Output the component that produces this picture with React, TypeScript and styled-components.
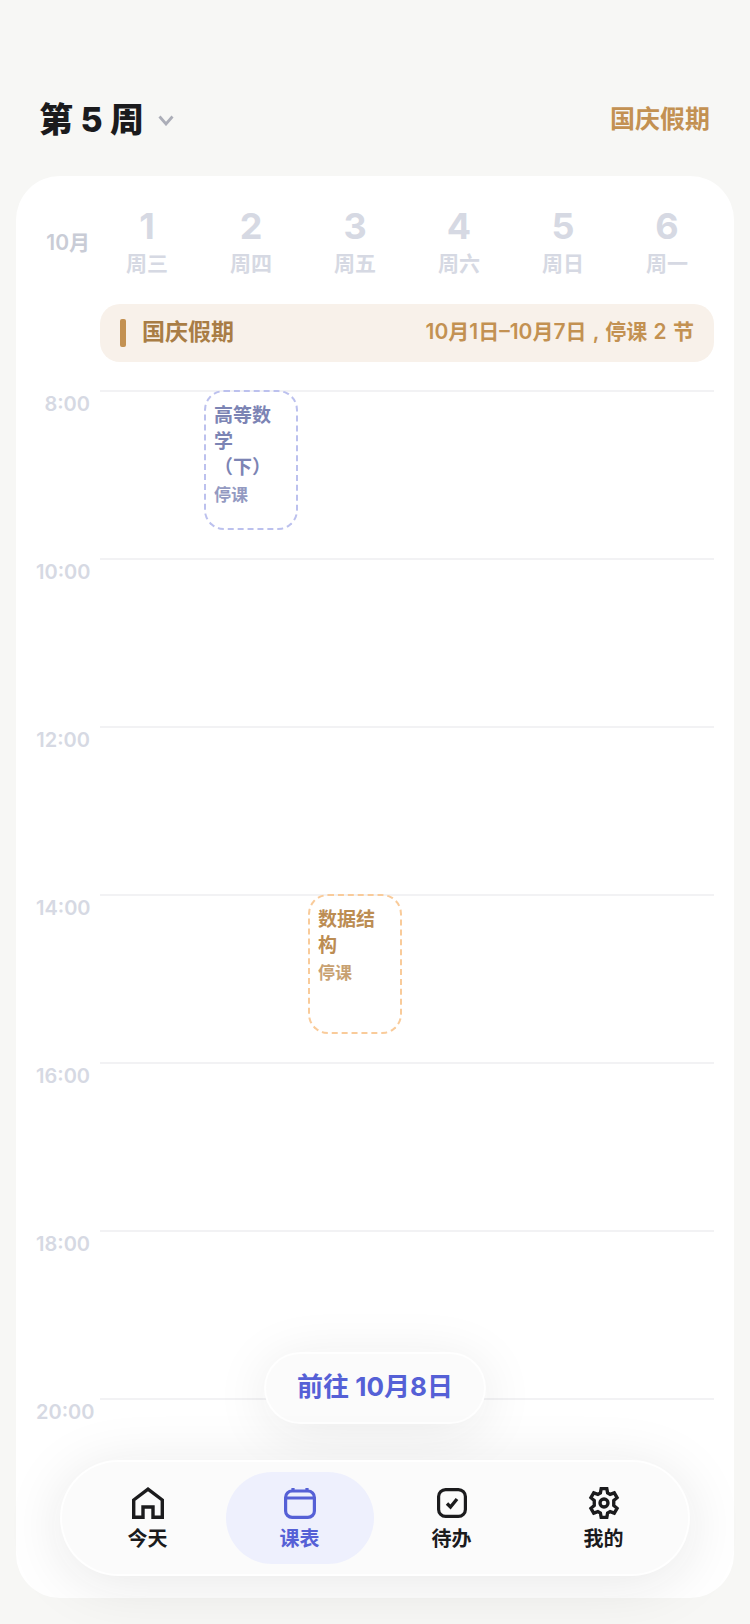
import React from "react";
import styled, { createGlobalStyle } from "styled-components";

const FONT = `Inter, "Noto Sans CJK SC", sans-serif`;

const GlobalStyle = createGlobalStyle`
  html, body {
    margin: 0;
    padding: 0;
    background: #f7f7f5;
    font-family: ${FONT};
  }
`;

const Page = styled.div`
  position: relative;
  width: 750px;
  height: 1624px;
  overflow: hidden;
  background: #f7f7f5;
`;

const Header = styled.header`
  display: flex;
  align-items: center;
  justify-content: space-between;
  height: 48px;
  padding: 93px 40px 35px 39px;
`;
const WeekPicker = styled.div`
  display: flex;
  align-items: center;
  gap: 14px;
`;
const WeekTitle = styled.div`
  font-size: 34px;
  font-weight: 800;
  color: #1b1b1d;
`;
const ChevronIcon = styled.svg`
  margin-top: 6px;
  fill: none;
  stroke: #acaeb8;
`;
const HolidayLink = styled.div`
  font-size: 25px;
  font-weight: 700;
  color: #c39152;
`;

const Card = styled.main`
  height: 1422px;
  margin: 0 16px;
  padding: 28px 20px 0 20px;
  box-sizing: border-box;
  background: #fff;
  border-radius: 44px;
  overflow: hidden;
`;

const DayHead = styled.div`
  display: flex;
  align-items: center;
`;
const MonthLabel = styled.div`
  flex: none;
  width: 54px;
  margin-right: 5px;
  text-align: right;
  font-size: 21px;
  font-weight: 600;
  color: #c9ccd6;
`;
const DayCol = styled.div`
  flex: 0 0 104px;
  display: flex;
  flex-direction: column;
  align-items: center;
`;
const DayNumber = styled.div`
  font-size: 36px;
  line-height: 44px;
  font-weight: 700;
  color: #d6d9e3;
`;
const DayName = styled.div`
  margin-top: 2px;
  font-size: 21px;
  line-height: 28px;
  font-weight: 600;
  color: #d6d9e3;
`;

const Banner = styled.div`
  display: flex;
  align-items: center;
  height: 58px;
  margin: 26px 0 28px 64px;
  padding: 0 20px;
  background: #f8f1ea;
  border-radius: 20px;
  color: #a97d45;
`;
const BannerBar = styled.div`
  width: 6px;
  height: 28px;
  border-radius: 2px;
  background: #c39152;
  margin-right: 16px;
`;
const BannerTitle = styled.div`
  flex: 1;
  font-size: 23px;
  font-weight: 700;
  padding-bottom: 6px;
`;
const BannerInfo = styled.div`
  font-size: 21px;
  font-weight: 600;
  word-spacing: 1px;
  color: #c39152;
  padding-bottom: 6px;
`;

const Row = styled.div`
  display: flex;
  height: 168px;
`;
const TimeLabel = styled.div`
  width: 54px;
  margin-right: 10px;
  text-align: right;
  font-size: 20px;
  line-height: 24px;
  padding-top: 2px;
  font-weight: 600;
  color: #d6d9e3;
`;
const RowBody = styled.div`
  flex: 1;
  border-top: 2px solid #f2f2f4;
`;
const Cells = styled.div`
  display: grid;
  grid-template-columns: repeat(6, 104px);
  margin: -2px -5px 0 -5px;
`;
const Cell = styled.div`
  display: flex;
  justify-content: center;
`;
const Course = styled.div<{ $tone: "blue" | "orange" }>`
  width: 94px;
  height: 140px;
  box-sizing: border-box;
  padding: 11px 22px 0 8px;
  border: 2px dashed ${(p) => (p.$tone === "blue" ? "#bcc1ee" : "#f9cb9a")};
  border-radius: 20px;
  color: ${(p) => (p.$tone === "blue" ? "#7c84b4" : "#bc8d53")};
`;
const CourseName = styled.div`
  font-size: 19px;
  line-height: 26px;
  font-weight: 600;
`;
const CourseNote = styled.div`
  margin-top: 2px;
  font-size: 17px;
  line-height: 24px;
  font-weight: 600;
  opacity: 0.82;
`;

const JumpPill = styled.div`
  position: absolute;
  left: 264px;
  top: 1352px;
  display: flex;
  align-items: center;
  justify-content: center;
  width: 222px;
  height: 72px;
  box-sizing: border-box;
  padding-bottom: 8px;
  border: 2px solid rgba(255, 255, 255, 0.9);
  border-radius: 36px;
  background: #fbfbfb;
  box-shadow: 0 8px 56px rgba(30, 30, 30, 0.09);
  font-size: 26px;
  font-weight: 700;
  color: #5560d6;
`;

const Nav = styled.nav`
  position: absolute;
  left: 60px;
  top: 1460px;
  display: grid;
  grid-template-columns: repeat(4, 148px);
  gap: 4px;
  width: 630px;
  height: 116px;
  box-sizing: border-box;
  padding: 10px 11px 10px 11.5px;
  border: 2px solid rgba(255, 255, 255, 0.9);
  border-radius: 58px;
  background: #fbfbfb;
  box-shadow: 0 8px 60px rgba(30, 30, 30, 0.1);
`;
const NavItem = styled.div<{ $active?: boolean }>`
  display: flex;
  flex-direction: column;
  align-items: center;
  height: 92px;
  padding-top: 15px;
  box-sizing: border-box;
  border-radius: 46px;
  background: ${(p) => (p.$active ? "#eef0fd" : "transparent")};
  color: ${(p) => (p.$active ? "#5560d6" : "#1b1b1d")};
`;
const NavIcon = styled.svg`
  display: block;
  width: 32px;
  height: 32px;
  fill: none;
  stroke: currentColor;
`;
const NavLabel = styled.div`
  margin-top: 6px;
  font-size: 20px;
  line-height: 28px;
  font-weight: 600;
`;

const days = [
  ["1", "周三"],
  ["2", "周四"],
  ["3", "周五"],
  ["4", "周六"],
  ["5", "周日"],
  ["6", "周一"],
];

const courses: Record<string, { col: number; name: string; tone: "blue" | "orange" }> = {
  "8:00": { col: 1, name: "高等数学（下）", tone: "blue" },
  "14:00": { col: 2, name: "数据结构", tone: "orange" },
};

const times = ["8:00", "10:00", "12:00", "14:00", "16:00", "18:00", "20:00"];

const Chevron = () => (
  <ChevronIcon width="16" height="11" viewBox="0 0 16 11" strokeWidth="2.8">
    <path d="M1.5 1.5 8 9l6.500-7.500" />
  </ChevronIcon>
);

const HomeIcon = () => (
  <NavIcon viewBox="0 0 32 32" strokeWidth="3.4">
    <path d="M1.700 30.300V13L16 2.200 30.300 13v17.300H21V20H11v10.300z" />
  </NavIcon>
);
const CalendarIcon = () => (
  <NavIcon viewBox="0 0 32 32" strokeWidth="3.2">
    <rect x="1.600" y="4" width="28.800" height="26.400" rx="6.500" />
    <path d="M1.600 11h28.800M9 1v4M23 1v4" />
  </NavIcon>
);
const TodoIcon = () => (
  <NavIcon viewBox="0 0 32 32" strokeWidth="3.2">
    <rect x="2.600" y="2.600" width="26.800" height="26.800" rx="7" />
    <path d="m11 16.500 3.500 3.500 6.500-8" strokeWidth="3.400" />
  </NavIcon>
);
const GearIcon = () => (
  <NavIcon viewBox="0 0 24 24" strokeWidth="2.500" strokeLinejoin="miter">
    <path d="M9.900 1.200h4.200l.6 3.200 1.900 1.100 3.100-1.100 2.100 3.600-2.500 2.100v3.800l2.500 2.100-2.100 3.600-3.100-1.100-1.900 1.100-.6 3.200H9.900l-.6-3.200-1.900-1.100-3.100 1.100-2.100-3.600 2.500-2.100v-3.800L2.200 8l2.100-3.600 3.100 1.100 1.900-1.100z" />
    <circle cx="12" cy="12" r="3" />
  </NavIcon>
);

export default function App() {
  return (
    <Page>
      <GlobalStyle />
      <Header>
        <WeekPicker>
          <WeekTitle>第 5 周</WeekTitle>
          <Chevron />
        </WeekPicker>
        <HolidayLink>国庆假期</HolidayLink>
      </Header>
      <Card>
        <DayHead>
          <MonthLabel>10月</MonthLabel>
          {days.map(([n, name]) => (
            <DayCol key={n}>
              <DayNumber>{n}</DayNumber>
              <DayName>{name}</DayName>
            </DayCol>
          ))}
        </DayHead>
        <Banner>
          <BannerBar />
          <BannerTitle>国庆假期</BannerTitle>
          <BannerInfo>10月1日–10月7日 , 停课 2 节</BannerInfo>
        </Banner>
        {times.map((t) => {
          const course = courses[t];
          return (
            <Row key={t}>
              <TimeLabel>{t}</TimeLabel>
              <RowBody>
                <Cells>
                  {days.map((_, i) => (
                    <Cell key={i}>
                      {course && course.col === i && (
                        <Course $tone={course.tone}>
                          <CourseName>{course.name}</CourseName>
                          <CourseNote>停课</CourseNote>
                        </Course>
                      )}
                    </Cell>
                  ))}
                </Cells>
              </RowBody>
            </Row>
          );
        })}
      </Card>
      <JumpPill>前往 10月8日</JumpPill>
      <Nav>
        <NavItem>
          <HomeIcon />
          <NavLabel>今天</NavLabel>
        </NavItem>
        <NavItem $active>
          <CalendarIcon />
          <NavLabel>课表</NavLabel>
        </NavItem>
        <NavItem>
          <TodoIcon />
          <NavLabel>待办</NavLabel>
        </NavItem>
        <NavItem>
          <GearIcon />
          <NavLabel>我的</NavLabel>
        </NavItem>
      </Nav>
    </Page>
  );
}
